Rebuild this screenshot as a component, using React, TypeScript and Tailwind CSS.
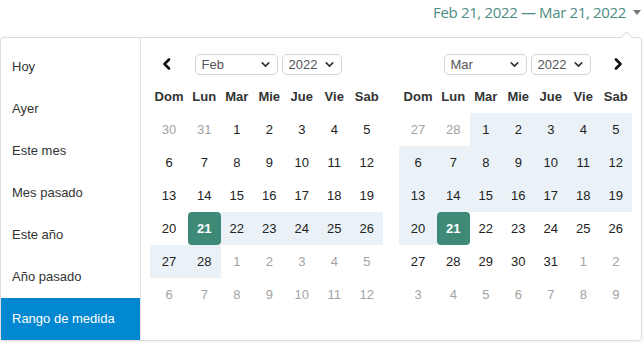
import { ChevronDown } from 'lucide-react';

const PRESETS = ['Hoy', 'Ayer', 'Este mes', 'Mes pasado', 'Este año', 'Año pasado', 'Rango de medida'];
const WEEKDAYS = ['Dom', 'Lun', 'Mar', 'Mie', 'Jue', 'Vie', 'Sab'];

type Day = { n: number; out?: boolean; range?: boolean; sel?: boolean };

const FEB: Day[] = [
  { n: 30, out: true }, { n: 31, out: true }, ...[1, 2, 3, 4, 5].map((n) => ({ n })),
  ...[6, 7, 8, 9, 10, 11, 12, 13, 14, 15, 16, 17, 18, 19, 20].map((n) => ({ n })),
  { n: 21, sel: true },
  ...[22, 23, 24, 25, 26, 27, 28].map((n) => ({ n, range: true })),
  ...[1, 2, 3, 4, 5, 6, 7, 8, 9, 10, 11, 12].map((n) => ({ n, out: true })),
];

const MAR: Day[] = [
  { n: 27, out: true }, { n: 28, out: true },
  ...Array.from({ length: 20 }, (_, i) => ({ n: i + 1, range: true })),
  { n: 21, sel: true },
  ...[22, 23, 24, 25, 26, 27, 28, 29, 30, 31].map((n) => ({ n })),
  ...[1, 2, 3, 4, 5, 6, 7, 8, 9].map((n) => ({ n, out: true })),
];

function Arrow({ dir }: { dir: 'left' | 'right' }) {
  return (
    <svg width="10" height="12" viewBox="0 0 10 12" fill="none">
      <path
        d={dir === 'left' ? 'M7 1.5 L2.5 6 L7 10.5' : 'M3 1.5 L7.5 6 L3 10.5'}
        stroke="#111"
        strokeWidth="2.6"
        strokeLinecap="round"
        strokeLinejoin="round"
      />
    </svg>
  );
}

function SelectBox({ label, width }: { label: string; width: string }) {
  return (
    <div className={`${width} h-[21px] flex items-center justify-between pl-[6px] pr-[5px] border border-[#d4d4d4] rounded-[5px] bg-white`}>
      <span className="text-[13px] text-[#555]">{label}</span>
      <ChevronDown size={13} strokeWidth={3} color="#333" />
    </div>
  );
}

function Calendar({ month, days, side }: { month: string; days: Day[]; side: 'left' | 'right' }) {
  return (
    <div className="w-[233px] flex flex-col">
      <div className="relative h-[21px] flex items-center justify-center gap-[4px] pl-[3px]">
        {side === 'left' ? (
          <div className="absolute left-[12px] top-[4px]"><Arrow dir="left" /></div>
        ) : (
          <div className="absolute right-[9px] top-[4px]"><Arrow dir="right" /></div>
        )}
        <SelectBox label={month} width="w-[83px]" />
        <SelectBox label="2022" width="w-[60px]" />
      </div>
      <div className="mt-[5px] grid grid-cols-[38px_repeat(6,1fr)]">
        {WEEKDAYS.map((w) => (
          <div key={w} className="h-[33px] flex items-center justify-center text-[13px] font-bold text-[#333]">
            {w}
          </div>
        ))}
        {days.map((d, i) => (
          <div
            key={i}
            className={`h-[33px] flex items-center justify-center text-[13px] ${
              d.sel
                ? 'bg-[#3e8a77] text-white font-bold rounded-[4px]'
                : d.range
                ? 'bg-[#eaf2f8] text-[#222]'
                : d.out
                ? 'text-[#a3a3a3]'
                : 'text-[#222]'
            }`}
          >
            {d.n}
          </div>
        ))}
      </div>
    </div>
  );
}

export default function App() {
  return (
    <div className="w-[644px] h-[343px] bg-white overflow-hidden" style={{ fontFamily: '"Liberation Sans", Arial, sans-serif' }}>
      {/* Trigger */}
      <div className="h-[38px] flex justify-end items-start pt-[1px] pr-[3px]">
        <div className="flex items-center gap-[7px]">
          <span className="text-[15px] tracking-[-0.35px] text-[#4d8c84]" style={{ fontFamily: '"Open Sans", sans-serif' }}>
            Feb 21, 2022 — Mar 21, 2022
          </span>
          <svg width="8" height="5" viewBox="0 0 8 5"><path d="M0 0 L8 0 L4 5 Z" fill="#777" /></svg>
        </div>
      </div>

      {/* Dropdown panel */}
      <div className="relative w-[642px] h-[304px] -mt-px flex border border-[#dcdcdc] rounded-[4px] bg-white shadow-[0_2px_6px_rgba(0,0,0,0.06)]">
        <div className="absolute left-[621px] top-[-5px] w-[9px] h-[9px] rotate-45 bg-white border-l border-t border-[#dcdcdc]" />

        <div className="w-[140px] flex-shrink-0 pt-[8px] border-r border-[#e0e0e0]">
          {PRESETS.map((p, i) => (
            <div
              key={p}
              className={`h-[42px] flex items-center pl-[11px] text-[13px] ${
                i === PRESETS.length - 1 ? 'bg-[#0288d1] text-white' : 'text-[#333]'
              }`}
            >
              {p}
            </div>
          ))}
        </div>

        <div className="flex gap-[16px] pl-[9px] pt-[16px]">
          <Calendar month="Feb" days={FEB} side="left" />
          <Calendar month="Mar" days={MAR} side="right" />
        </div>
      </div>
    </div>
  );
}
